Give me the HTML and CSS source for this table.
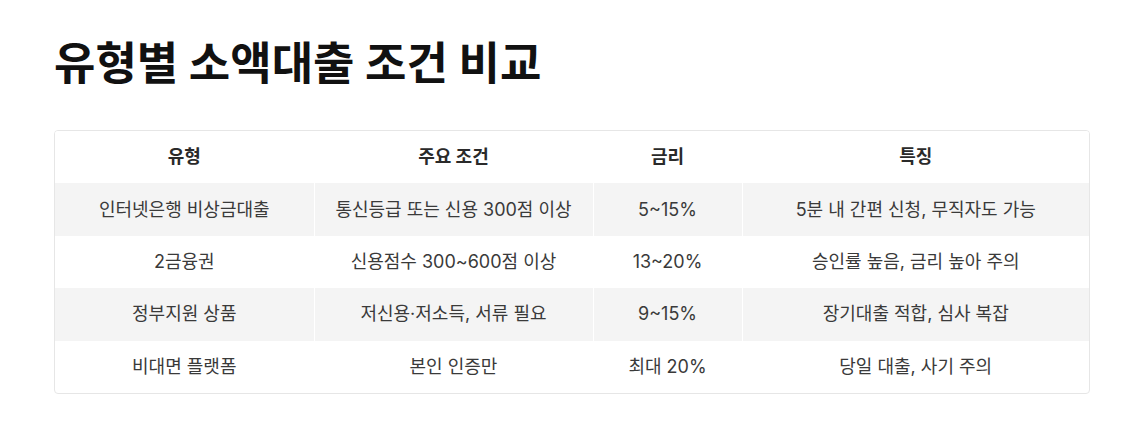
FILE: index.html
```html
<!DOCTYPE html>
<html lang="ko">
<head>
<meta charset="utf-8">
<link rel="stylesheet" href="styles.css">
</head>
<body>
<main class="page">
  <h1 class="title">유형별 소액대출 조건 비교</h1>
  <div class="table-wrap">
    <table class="compare">
      <colgroup>
        <col class="c1"><col class="c2"><col class="c3"><col class="c4">
      </colgroup>
      <thead>
        <tr><th>유형</th><th>주요 조건</th><th>금리</th><th>특징</th></tr>
      </thead>
      <tbody>
        <tr><td>인터넷은행 비상금대출</td><td>통신등급 또는 신용 300점 이상</td><td>5~15%</td><td>5분 내 간편 신청, 무직자도 가능</td></tr>
        <tr><td>2금융권</td><td>신용점수 300~600점 이상</td><td>13~20%</td><td>승인률 높음, 금리 높아 주의</td></tr>
        <tr><td>정부지원 상품</td><td>저신용·저소득, 서류 필요</td><td>9~15%</td><td>장기대출 적합, 심사 복잡</td></tr>
        <tr><td>비대면 플랫폼</td><td>본인 인증만</td><td>최대 20%</td><td>당일 대출, 사기 주의</td></tr>
      </tbody>
    </table>
  </div>
</main>
</body>
</html>
```

FILE: styles.css
```css
html, body {
  margin: 0;
  padding: 0;
  background: #ffffff;
}
body {
  font-family: Inter, "Noto Sans CJK KR", sans-serif;
  color: #333333;
}
.page {
  padding: 32px 54px 0 54px;
}
.title {
  margin: 0 0 34px 0;
  font-size: 45px;
  line-height: 64px;
  font-weight: 700;
  color: #111111;
  letter-spacing: 0;
}
.table-wrap {
  border: 1px solid #e6e6e6;
  border-radius: 4px;
  overflow: hidden;
}
.compare {
  width: 100%;
  border-collapse: collapse;
  table-layout: fixed;
  font-size: 18px;
}
.c1 { width: 259px; }
.c2 { width: 279px; }
.c3 { width: 149px; }
.c4 { width: auto; }
.compare th,
.compare td {
  height: 52.4px;
  padding: 0 8px;
  text-align: center;
  vertical-align: middle;
  line-height: 22px;
  border-left: 1px solid #ffffff;
}
.compare th:first-child,
.compare td:first-child {
  border-left: none;
}
.compare th {
  font-weight: 700;
  color: #2a2a2a;
  background: #ffffff;
}
.compare td {
  color: #3a3a3a;
}
.compare tbody tr:nth-child(odd) td {
  background: #f4f4f4;
}
```
